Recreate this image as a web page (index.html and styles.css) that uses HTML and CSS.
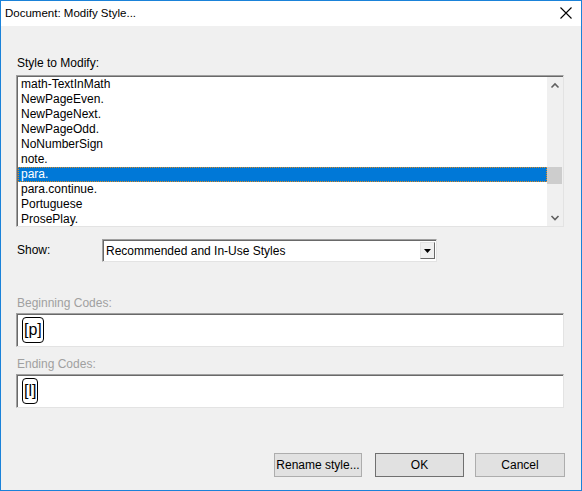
FILE: index.html
```html
<!DOCTYPE html>
<html>
<head>
<meta charset="utf-8">
<link rel="stylesheet" href="styles.css">
</head>
<body>
<div class="window">
  <div class="titlebar">
    <span class="title">Document: Modify Style...</span>
    <svg class="close" width="12" height="12" viewBox="0 0 12 12"><path d="M0.5 0.5 L11.5 11.5 M11.5 0.5 L0.5 11.5" stroke="#000" stroke-width="1.1" fill="none"/></svg>
  </div>
  <div class="content">
    <div class="label first">Style to Modify:</div>
    <div class="listbox">
      <div class="items">
        <div class="item">math-TextInMath</div>
        <div class="item">NewPageEven.</div>
        <div class="item">NewPageNext.</div>
        <div class="item">NewPageOdd.</div>
        <div class="item">NoNumberSign</div>
        <div class="item">note.</div>
        <div class="item sel">para.</div>
        <div class="item">para.continue.</div>
        <div class="item">Portuguese</div>
        <div class="item">ProsePlay.</div>
      </div>
      <div class="scrollbar">
        <svg class="arrow" width="16" height="17" viewBox="0 0 16 17"><path d="M4.5 10.5 L8 7 L11.5 10.5" stroke="#606060" stroke-width="1.6" fill="none"/></svg>
        <div class="track"><div class="thumb"></div></div>
        <svg class="arrow" width="16" height="17" viewBox="0 0 16 17"><path d="M4.5 7 L8 10.5 L11.5 7" stroke="#606060" stroke-width="1.6" fill="none"/></svg>
      </div>
    </div>
    <div class="showrow">
      <span class="showlabel">Show:</span>
      <div class="combo">
        <span class="combotext">Recommended and In-Use Styles</span>
        <div class="combobtn"><svg width="7" height="4" viewBox="0 0 7 4"><path d="M0 0 H7 L3.5 4 Z" fill="#000"/></svg></div>
      </div>
    </div>
    <div class="label dim codes-label">Beginning Codes:</div>
    <div class="codebox"><span class="code">[p]</span></div>
    <div class="label dim codes-label2">Ending Codes:</div>
    <div class="codebox"><span class="code">[l]</span></div>
    <div class="buttons">
      <button class="btn rename">Rename style...</button>
      <button class="btn ok">OK</button>
      <button class="btn cancel">Cancel</button>
    </div>
  </div>
</div>
</body>
</html>
```
FILE: styles.css
```css
html, body {
  margin: 0;
  padding: 0;
}
body {
  width: 582px;
  height: 491px;
  overflow: hidden;
  font-family: "Liberation Sans", Arial, sans-serif;
  font-size: 12px;
  color: #000;
}
.window {
  box-sizing: border-box;
  width: 582px;
  height: 491px;
  border: 1px solid #1a82d9;
  background: #f0f0f0;
  display: flex;
  flex-direction: column;
}
.titlebar {
  height: 25px;
  background: #fff;
  display: flex;
  align-items: center;
  justify-content: space-between;
  padding: 0 9px 0 4px;
  flex: none;
}
.title {
  font-size: 11.5px;
  line-height: 16px;
  margin-top: -1px;
}
.close {
  display: block;
  margin-top: -2px;
}
.content {
  padding: 0 17px 0 15px;
  display: flex;
  flex-direction: column;
}
.label {
  line-height: 16px;
  height: 16px;
  padding-left: 1px;
}
.label.first {
  margin-top: 29px;
}
.dim {
  color: #a0a0a0;
}
.listbox {
  margin-top: 4px;
  height: 152px;
  box-sizing: border-box;
  border-top: 1px solid #a0a0a0;
  border-left: 1px solid #a0a0a0;
  border-right: 1px solid #e3e3e3;
  border-bottom: 1px solid #e3e3e3;
  box-shadow: inset 1px 1px 0 #696969;
  background: #fff;
  display: flex;
}
.items {
  flex: 1;
  padding: 1px 0 0 1px;
}
.item {
  height: 15px;
  line-height: 15px;
  padding-left: 3px;
  white-space: nowrap;
}
.item.sel {
  background: #0078d7;
  color: #fff;
  outline: 1px dotted #e08a1e;
  outline-offset: -1px;
}
.scrollbar {
  width: 16px;
  background: #f0f0f0;
  display: flex;
  flex-direction: column;
  margin-top: 1px;
}
.arrow {
  display: block;
  flex: none;
}
.track {
  flex: 1;
  position: relative;
}
.thumb {
  position: absolute;
  left: 0;
  right: 1px;
  top: 73px;
  height: 17px;
  background: #cdcdcd;
}
.showrow {
  display: flex;
  align-items: center;
  margin-top: 12px;
  height: 23px;
}
.showlabel {
  width: 85px;
  padding-left: 1px;
  margin-top: -1px;
}
.combo {
  width: 335px;
  height: 23px;
  box-sizing: border-box;
  border-top: 1px solid #a0a0a0;
  border-left: 1px solid #a0a0a0;
  border-right: 1px solid #e3e3e3;
  border-bottom: 1px solid #e3e3e3;
  box-shadow: inset 1px 1px 0 #696969;
  background: #fff;
  display: flex;
  align-items: center;
  justify-content: space-between;
  padding: 0 1px 0 3px;
}
.combotext {
  line-height: 16px;
}
.combobtn {
  width: 15px;
  height: 17px;
  box-sizing: border-box;
  background: #f0f0f0;
  border-top: 1px solid #e3e3e3;
  border-left: 1px solid #e3e3e3;
  border-right: 1px solid #696969;
  border-bottom: 1px solid #696969;
  display: flex;
  align-items: center;
  justify-content: center;
}
.combobtn svg {
  display: block;
}
.codes-label {
  margin-top: 33px;
}
.codes-label2 {
  margin-top: 9px;
}
.codebox {
  margin-top: 2px;
  height: 34px;
  box-sizing: border-box;
  border-top: 1px solid #a0a0a0;
  border-left: 1px solid #a0a0a0;
  border-right: 1px solid #e3e3e3;
  border-bottom: 1px solid #e3e3e3;
  box-shadow: inset 1px 1px 0 #696969;
  background: #fff;
  display: flex;
  align-items: center;
  padding-left: 5px;
}
.code {
  border: 1px solid #000;
  border-radius: 4px;
  font-size: 16px;
  line-height: 24px;
  height: 24px;
  padding: 0 1px;
}
.buttons {
  display: flex;
  justify-content: flex-end;
  margin-top: 45px;
  margin-right: -1px;
}
.btn {
  font-family: "Liberation Sans", Arial, sans-serif;
  font-size: 12px;
  height: 24px;
  box-sizing: border-box;
  background: #e1e1e1;
  border: 1px solid #adadad;
  color: #000;
  padding: 0;
  margin: 0;
}
.rename {
  width: 88px;
}
.ok {
  width: 89px;
  margin-left: 13px;
  border-color: #707070;
}
.cancel {
  width: 90px;
  margin-left: 11px;
}
```
